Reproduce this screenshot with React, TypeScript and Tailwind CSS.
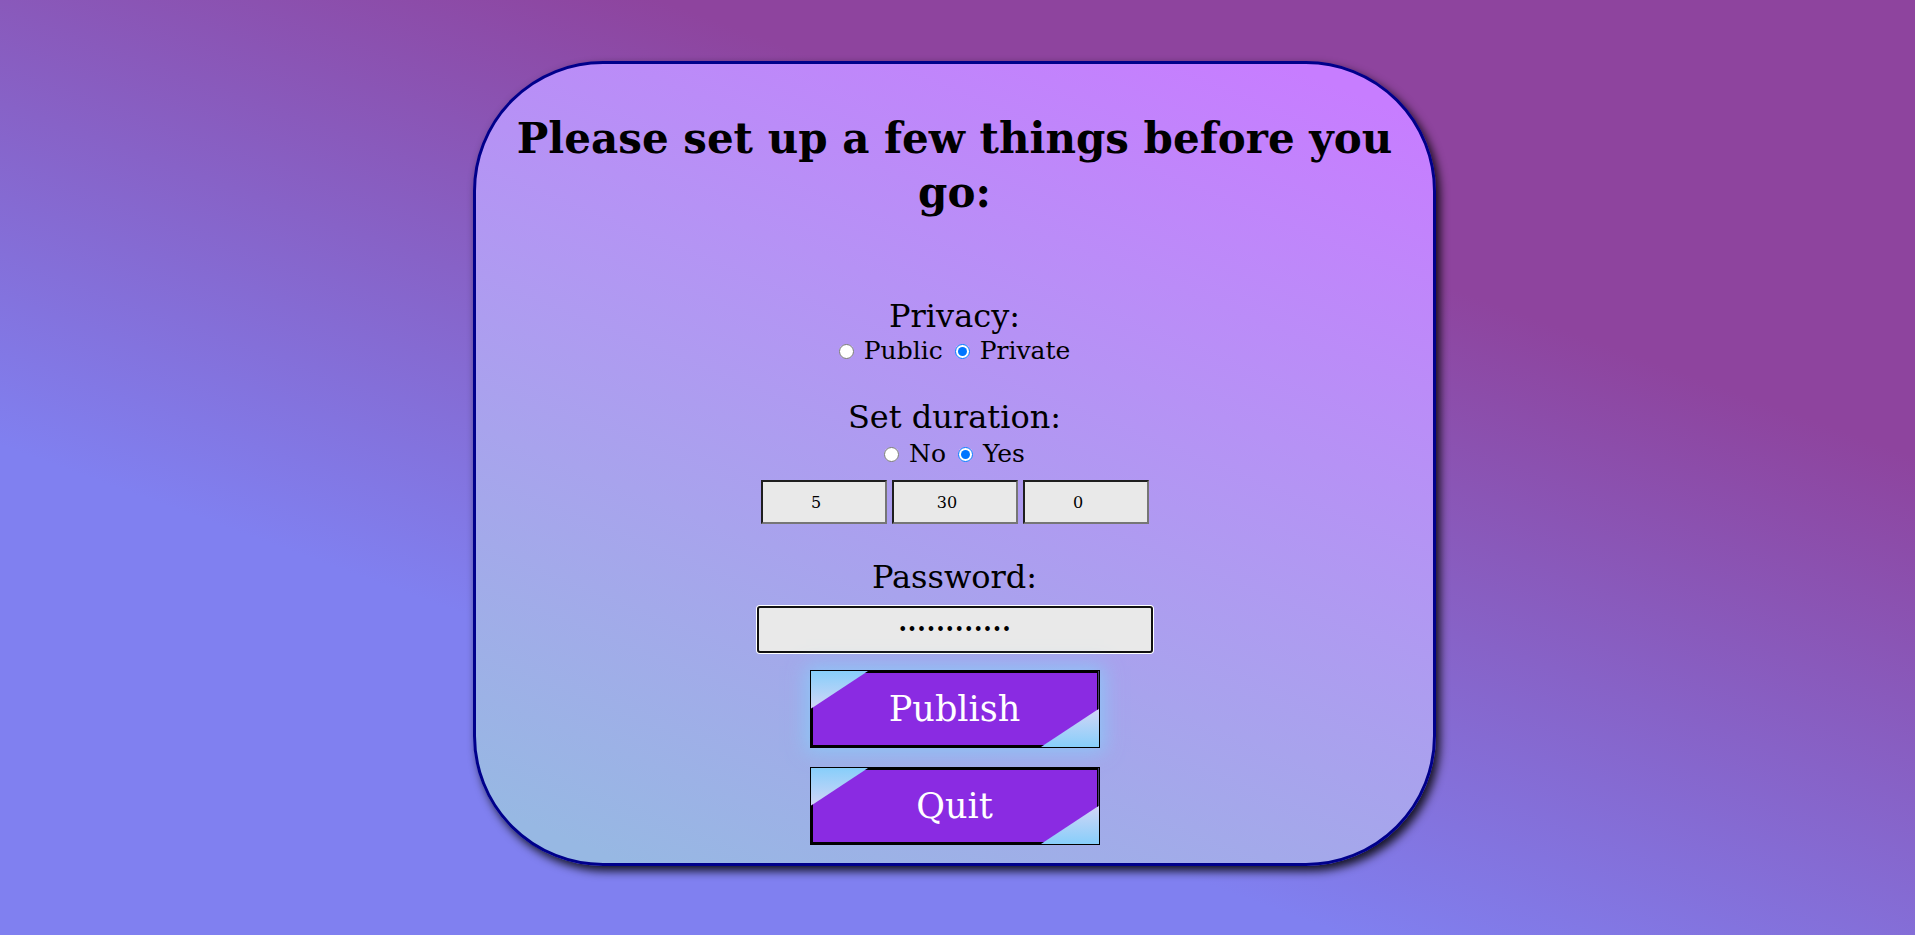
import React from 'react';

const serif = "font-['DejaVu_Serif',serif]";

function RadioRow({ name, options, checked }: { name: string; options: string[]; checked: string }) {
  return (
    <div className="flex items-center justify-center text-[25px] leading-[30px]">
      {options.map((opt, i) => (
        <label key={opt} className={`flex items-center ${i > 0 ? 'ml-[12px]' : ''}`}>
          <input
            type="radio"
            name={name}
            defaultChecked={opt === checked}
            className="m-0 h-[15px] w-[15px]"
          />
          <span className="ml-[10px]">{opt}</span>
        </label>
      ))}
    </div>
  );
}

function FancyButton({ label, glow }: { label: string; glow?: boolean }) {
  return (
    <button
      className={`block h-[78px] w-[290px] border border-black bg-[linear-gradient(to_bottom,#87cefa,#d2d6f6,#87cefa)] p-0 ${
        glow ? 'shadow-[0_0_18px_4px_rgba(135,206,250,0.75)]' : ''
      }`}
    >
      <span className="flex h-full w-full items-center justify-center border-2 border-black bg-[#8a2be2] text-[35px] text-white [clip-path:polygon(20%_0,100%_0,100%_50%,80%_100%,0_100%,0_50%)]">
        {label}
      </span>
    </button>
  );
}

export default function App() {
  return (
    <div
      className={`flex min-h-screen w-full justify-center bg-[linear-gradient(20deg,#8080f0_30%,#8e449e_72%)] pt-[61px] text-black ${serif}`}
    >
      <div className="mr-[6px] flex h-[805px] w-[963px] flex-col items-center rounded-[130px] border-[3px] border-[#00008b] bg-[linear-gradient(22deg,#97b8e3_5%,#c77dff_95%)] px-[30px] shadow-[4px_5px_10px_rgba(0,0,0,0.85)]">
        <h1 className="mt-[48px] text-center text-[42px] font-bold leading-[54px]">
          Please set up a few things before you go:
        </h1>

        <div className="mt-[76px] text-[32px] leading-[40px]">Privacy:</div>
        <RadioRow name="privacy" options={['Public', 'Private']} checked="Private" />

        <div className="mt-[31px] text-[32px] leading-[40px]">Set duration:</div>
        <div className="mt-[2px]">
          <RadioRow name="duration" options={['No', 'Yes']} checked="Yes" />
        </div>

        <div className="mt-[11px] flex gap-[5px]">
          {['5', '30', '0'].map((v) => (
            <input
              key={v}
              type="number"
              defaultValue={v}
              className="h-[44px] w-[126px] border-2 border-[#767676] border-t-[#1f1f1f] border-l-[#1f1f1f] bg-[#e9e9e9] px-[2px] text-center text-[16px]"
            />
          ))}
        </div>

        <div className="mt-[33px] text-[32px] leading-[40px]">Password:</div>
        <input
          type="password"
          defaultValue="mysecretpass"
          className="mt-[9px] h-[47px] w-[396px] rounded-[3px] border-2 border-[#111] bg-[#e9e9e9] text-center text-[16px] ring-1 ring-white"
        />

        <div className="mt-[17px]">
          <FancyButton label="Publish" glow />
        </div>
        <div className="mt-[19px]">
          <FancyButton label="Quit" />
        </div>
      </div>
    </div>
  );
}
